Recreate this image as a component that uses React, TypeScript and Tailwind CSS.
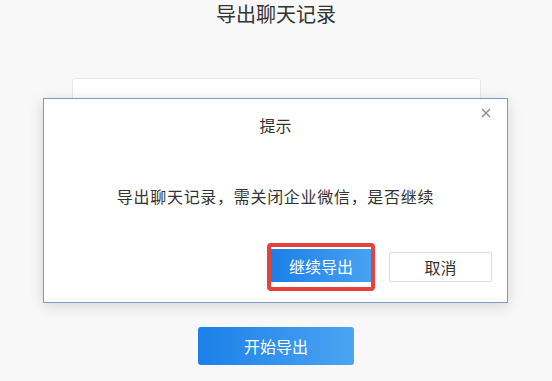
export default function App() {
  return (
    <div
      className="relative h-[381px] w-full overflow-hidden bg-[#f8f8f8] text-[#333]"
      style={{ fontFamily: '"Noto Sans CJK SC", "Noto Sans", sans-serif' }}
    >
      <div className="flex flex-col items-center pt-[2px]">
        <h1 className="text-[20px] leading-[24px] font-normal text-[#333]">导出聊天记录</h1>
        <div className="mt-[52px] h-[210px] w-[409px] rounded-[3px] border border-[#e8e8e8] bg-white" />
        <button className="mt-[39px] flex h-[38px] w-[156px] items-center justify-center rounded-[3px] bg-linear-to-r from-[#1a80e8] to-[#4aa4f2] text-[16px] text-white">
          开始导出
        </button>
      </div>

      {/* dialog */}
      <div className="absolute left-[43px] top-[98px] flex h-[205px] w-[465px] flex-col border border-[#7b9bcb] bg-white shadow-[0_3px_14px_rgba(0,0,0,0.14)]">
        <button className="absolute right-[16px] top-[9px] text-[#8a8a8a]">
          <svg width="10" height="10" viewBox="0 0 10 10" fill="none" stroke="currentColor" strokeWidth="1.3">
            <path d="M1 1l8 8M9 1l-8 8" />
          </svg>
        </button>
        <div className="pt-[15px] text-center text-[16px] leading-[22px]">提示</div>
        <div className="mt-[48px] text-center text-[16px] leading-[24px] tracking-[0.7px]">
          导出聊天记录，需关闭企业微信，是否继续
        </div>
        <div className="mt-[35px] flex items-center justify-end gap-[14px] pr-[15px]">
          <div className="rounded-[4px] border-4 border-[#e5423b] bg-white pt-[2px] pb-[5px]">
            <button className="flex h-[33px] w-[100px] items-center justify-center bg-linear-to-r from-[#1a7fe8] to-[#47a2f1] text-[16px] text-white">
              继续导出
            </button>
          </div>
          <button className="flex h-[30px] w-[103px] items-center justify-center rounded-[2px] border border-[#dcdcdc] bg-white text-[16px] text-[#333]">
            取消
          </button>
        </div>
      </div>
    </div>
  );
}
